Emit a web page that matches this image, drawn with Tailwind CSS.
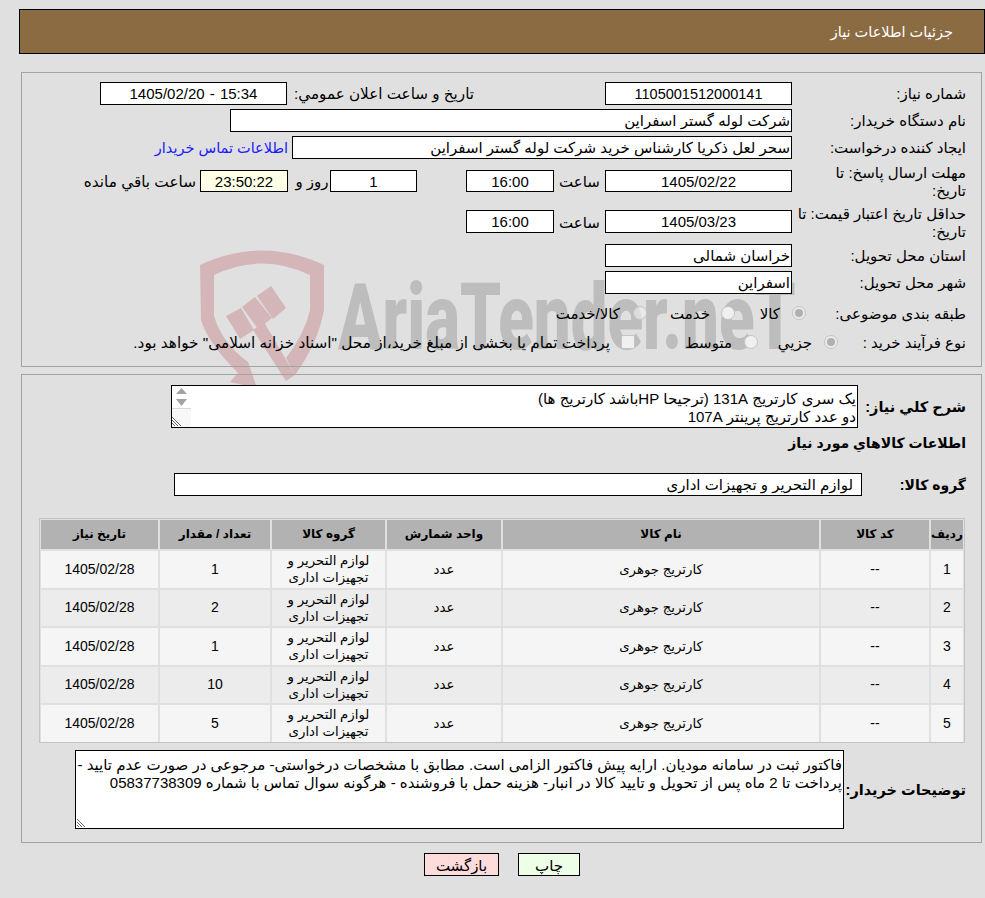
<!DOCTYPE html>
<html lang="fa" dir="rtl">
<head>
<meta charset="UTF-8" />
<script src="https://cdn.jsdelivr.net/npm/@tailwindcss/browser@4"></script>
<title>جزئیات اطلاعات نیاز</title>
</head>
<body class="bg-[#e0e0e0] text-black text-[15px] leading-[18px] font-['Liberation_Sans','DejaVu_Sans',sans-serif] h-[898px] overflow-hidden relative">

  <!-- watermark -->
  <div class="absolute left-0 top-0 w-[985px] h-[400px]" dir="ltr">
    <svg class="absolute left-[200px] top-[248px]" width="126" height="170" viewBox="0 0 126 170">
      <path d="M0 17 Q62 -12 124 17 L124 62 Q118 95 95 127 L86 110 Q105 85 110 62 L110 27 Q62 4 14 27 L14 68 Q22 95 48 114 L57 140 L30 134 L38 125 Q8 95 1 72 Z" fill="#d4b5b8"/>
      <path d="M26 68 L41 60 L54 82 L40 91 Z M42 59 L55 49 L72 70 L58 81 Z M57 48 L71 38 L86 60 L73 71 Z M53 82 L64 74 L95 127 L86 133 Z" fill="#d4b5b8"/>
    </svg>
    <div class="absolute left-[338px] top-[263px] text-[92px] leading-[110px] font-black font-['Roboto',sans-serif] text-[#bdbdbd] whitespace-nowrap origin-left scale-x-[.71]">AriaTender.neT</div>
  </div>

  <div class="relative">
    <div class="pt-[9px] pl-[19px]">
      <div class="h-[45px] bg-[#8b6b42] border border-black text-white pr-[31px] flex items-center text-[14.5px]">جزئیات اطلاعات نیاز</div>
    </div>

    <!-- main info -->
    <div class="ml-[21px] mr-[3px] mt-[18px] h-[295px] border border-[#a3a3a3] pt-[9px] pr-[14px]">
      <div class="flex h-[27px]">
        <div class="w-[175px] pt-[3px] pr-px">شماره نیاز:</div>
        <div class="w-[187px] h-[23px] bg-white border border-black text-center text-[14.5px] leading-[22px]">1105001512000141</div>
        <div class="w-[131px]"></div>
        <div class="w-[187px] pt-[3px] text-[15.2px] whitespace-nowrap">تاریخ و ساعت اعلان عمومي:</div>
        <div class="w-[187px] h-[23px] bg-white border border-black text-center text-[15px] leading-[22px] [word-spacing:1px]" dir="ltr">1405/02/20 - 15:34</div>
      </div>
      <div class="flex h-[27px]">
        <div class="w-[175px] pt-[3px] pr-px">نام دستگاه خریدار:</div>
        <div class="w-[562px] h-[23px] bg-white border border-black pr-[1px] leading-[22px]">شرکت لوله گستر اسفراین</div>
      </div>
      <div class="flex h-[27px]">
        <div class="w-[175px] pt-[3px] pr-px">ایجاد کننده درخواست:</div>
        <div class="w-[500px] h-[23px] bg-white border border-black pr-[1px] leading-[22px]">سحر لعل ذکریا کارشناس خرید شرکت لوله گستر اسفراین</div>
        <div class="pr-[4px] pt-[3px] text-[14.5px] text-[#1a1aff]">اطلاعات تماس خریدار</div>
      </div>
      <div class="flex h-[41px]">
        <div class="w-[175px] pt-[1px] pr-px">مهلت ارسال پاسخ: تا<br />تاریخ:</div>
        <div class="w-[187px] h-[22px] mt-[7px] bg-white border border-black text-center leading-[21px]">1405/02/22</div>
        <div class="w-[51px] text-center mt-[10px]">ساعت</div>
        <div class="w-[88px] h-[22px] mt-[7px] bg-white border border-black text-center leading-[21px]">16:00</div>
        <div class="w-[49px]"></div>
        <div class="w-[87px] h-[22px] mt-[7px] bg-white border border-black text-center leading-[21px]">1</div>
        <div class="w-[42px] text-center mt-[10px] pl-[6px] whitespace-nowrap">روز و</div>
        <div class="w-[88px] h-[22px] mt-[7px] bg-[#ffffe8] border border-black text-center leading-[21px]">23:50:22</div>
        <div class="pr-[4px] mt-[10px] text-[15.3px] whitespace-nowrap">ساعت باقي مانده</div>
      </div>
      <div class="flex h-[40px]">
        <div class="w-[175px] pt-[1px] pr-px">حداقل تاریخ اعتبار قیمت: تا<br />تاریخ:</div>
        <div class="w-[187px] h-[23px] mt-[6px] bg-white border border-black text-center leading-[22px]">1405/03/23</div>
        <div class="w-[51px] text-center mt-[10px]">ساعت</div>
        <div class="w-[88px] h-[23px] mt-[6px] bg-white border border-black text-center leading-[22px]">16:00</div>
      </div>
      <div class="flex h-[27px]">
        <div class="w-[175px] pt-[3px] pr-px">استان محل تحویل:</div>
        <div class="w-[187px] h-[23px] bg-white border border-black pr-[1px] leading-[22px]">خراسان شمالی</div>
      </div>
      <div class="flex h-[27px]">
        <div class="w-[175px] pt-[3px] pr-px">شهر محل تحویل:</div>
        <div class="w-[187px] h-[23px] bg-white border border-black pr-[1px] leading-[22px]">اسفراین</div>
      </div>
      <div class="flex h-[29px] items-center">
        <div class="w-[161px] pt-[2px] pr-px">طبقه بندی موضوعی:</div>
        <div class="w-[14px] h-[14px] rounded-full border border-[#c4c4c4] bg-[#ebebeb] flex items-center justify-center"><div class="w-[8px] h-[8px] rounded-full bg-[#b0b0b0]"></div></div>
        <div class="w-[57px] pr-[12px] pt-[2px]">کالا</div>
        <div class="w-[14px] h-[14px] rounded-full border border-[#c4c4c4] bg-[#f0f0f0]"></div>
        <div class="w-[74px] pr-[11px] pt-[2px]">خدمت</div>
        <div class="w-[14px] h-[14px] rounded-full border border-[#c4c4c4] bg-[#f0f0f0]/60"></div>
        <div class="pr-[13px] pt-[2px]">کالا/خدمت</div>
      </div>
      <div class="flex h-[30px] items-center">
        <div class="w-[129px] pt-[2px] pr-px">نوع فرآیند خرید :</div>
        <div class="w-[14px] h-[14px] rounded-full border border-[#c4c4c4] bg-[#ebebeb] flex items-center justify-center"><div class="w-[8px] h-[8px] rounded-full bg-[#b0b0b0]"></div></div>
        <div class="w-[66px] pr-[12px] pt-[2px]">جزيي</div>
        <div class="w-[14px] h-[14px] rounded-full border border-[#c4c4c4] bg-[#f0f0f0]"></div>
        <div class="w-[109px] pr-[12px] pt-[2px]">متوسط</div>
        <div class="w-[14px] h-[14px] rounded-[2px] border border-[#c4c4c4] bg-[#f0f0f0]"></div>
        <div class="pr-[11px] pt-[2px] text-[15.3px] whitespace-nowrap">پرداخت تمام یا بخشی از مبلغ خرید،از محل "اسناد خزانه اسلامی" خواهد بود.</div>
      </div>
    </div>

    <!-- second panel -->
    <div class="ml-[21px] mr-[3px] mt-[7px] h-[469px] border border-[#a3a3a3] pt-[10px] pr-[14px]">
      <div class="flex h-[44px]">
        <div class="w-[109px] pt-[13px] pr-px font-bold text-[14.5px] whitespace-nowrap">شرح کلي نیاز:</div>
        <div class="w-[687px] h-[43px] bg-white border border-black overflow-hidden pr-[1px] pt-[4px] relative">
          <div>یک سری کارتریج 131A (ترجیحا HPباشد کارتریج ها)</div>
          <div>دو عدد کارتریج پرینتر 107A</div>
          <div class="absolute left-0 top-0 w-[19px] h-full bg-white">
            <svg width="19" height="41" viewBox="0 0 19 41"><path d="M4 8 L9.500 2 L15 8 Z M4 13 L15 13 L9.500 20 Z" fill="#a3a3a3"/><path d="M0 22.500 H19" stroke="#d8d8d8"/><rect y="23" width="19" height="18" fill="#f8f8f8"/><path d="M0 31 L9 40 M0 34 L6 40 M0 37 L3 40" stroke="#666"/></svg>
          </div>
        </div>
      </div>
      <div class="font-bold text-[14px] h-[32px] pt-[5px] pr-px">اطلاعات کالاهاي مورد نیاز</div>
      <div class="flex h-[42px] mt-[12px]">
        <div class="w-[105px] pt-[3px] pr-px font-bold text-[14px]">گروه کالا:</div>
        <div class="w-[688px] h-[23px] bg-white border border-black pr-[8px] leading-[22px]">لوازم التحریر و تجهیزات اداری</div>
      </div>
      <div class="mt-[3px] mr-[2px] w-[926px] h-[225px] border border-[#c4c4c4] text-center">
        <table class="w-[926px] -m-px table-fixed border-separate border-spacing-[2px] text-[14px] leading-[17px]">
          <thead>
            <tr class="h-[29px] bg-[#b2b2b2] text-[12px]">
              <th class="w-[32px] font-bold">ردیف</th><th class="w-[108px] font-bold">کد کالا</th><th class="w-[316px] font-bold">نام کالا</th><th class="w-[114px] font-bold">واحد شمارش</th><th class="w-[113px] font-bold">گروه کالا</th><th class="w-[110px] font-bold">تعداد / مقدار</th><th class="font-bold">تاریخ نیاز</th>
            </tr>
          </thead>
          <tbody>
            <tr class="h-[36.5px] bg-[#f5f5f5]"><td>1</td><td>--</td><td class="text-[13.3px]">کارتریج جوهری</td><td class="text-[13.3px]">عدد</td><td class="text-[13.3px]">لوازم التحریر و<br />تجهیزات اداری</td><td>1</td><td>1405/02/28</td></tr>
            <tr class="h-[36.5px] bg-[#ececec]"><td>2</td><td>--</td><td class="text-[13.3px]">کارتریج جوهری</td><td class="text-[13.3px]">عدد</td><td class="text-[13.3px]">لوازم التحریر و<br />تجهیزات اداری</td><td>2</td><td>1405/02/28</td></tr>
            <tr class="h-[36.5px] bg-[#f5f5f5]"><td>3</td><td>--</td><td class="text-[13.3px]">کارتریج جوهری</td><td class="text-[13.3px]">عدد</td><td class="text-[13.3px]">لوازم التحریر و<br />تجهیزات اداری</td><td>1</td><td>1405/02/28</td></tr>
            <tr class="h-[36.5px] bg-[#ececec]"><td>4</td><td>--</td><td class="text-[13.3px]">کارتریج جوهری</td><td class="text-[13.3px]">عدد</td><td class="text-[13.3px]">لوازم التحریر و<br />تجهیزات اداری</td><td>10</td><td>1405/02/28</td></tr>
            <tr class="h-[36.5px] bg-[#f5f5f5]"><td>5</td><td>--</td><td class="text-[13.3px]">کارتریج جوهری</td><td class="text-[13.3px]">عدد</td><td class="text-[13.3px]">لوازم التحریر و<br />تجهیزات اداری</td><td>5</td><td>1405/02/28</td></tr>
          </tbody>
        </table>
      </div>
      <div class="flex mt-[7px]">
        <div class="w-[123px] pt-[31px] pr-px font-bold text-[14.5px] whitespace-nowrap">توضیحات خریدار:</div>
        <div class="w-[769px] h-[79px] bg-white border border-black pr-[1px] pt-[5px] relative">
          فاکتور ثبت در سامانه مودیان. ارایه پیش فاکتور الزامی است. مطابق با مشخصات درخواستی- مرجوعی در صورت عدم تایید - پرداخت تا 2 ماه پس از تحویل و تایید کالا در انبار- هزینه حمل با فروشنده - هرگونه سوال تماس با شماره 05837738309
          <svg class="absolute left-0 bottom-0" width="12" height="12" viewBox="0 0 12 12"><path d="M1 3 L9 11 M1 6 L6 11 M1 9 L3 11" stroke="#666"/></svg>
        </div>
      </div>
    </div>

    <!-- buttons -->
    <div class="mt-[10px] pl-[19px] flex justify-center gap-[19px]">
      <div class="w-[62px] h-[23px] bg-[#eeffe8] border border-black text-center leading-[23px]">چاپ</div>
      <div class="w-[75px] h-[23px] bg-[#ffdcdc] border border-black text-center leading-[23px]">بازگشت</div>
    </div>
  </div>
</body>
</html>
